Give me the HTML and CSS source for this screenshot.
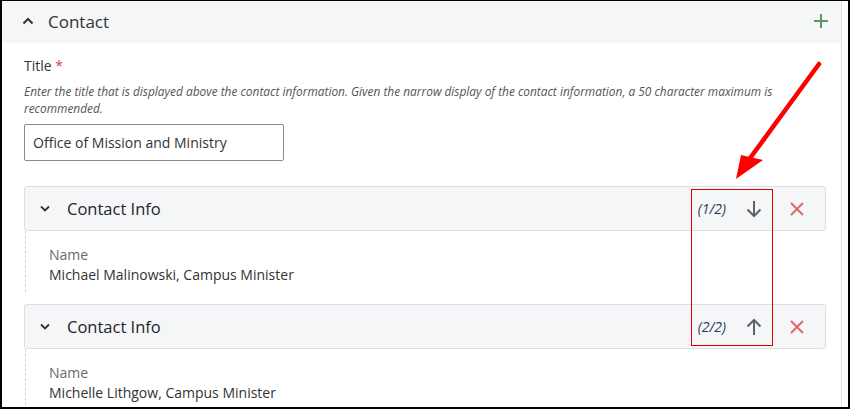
FILE: index.html
```html
<!DOCTYPE html>
<html lang="en">
<head>
<meta charset="utf-8">
<title>Contact</title>
<link rel="stylesheet" href="styles.css">
</head>
<body>
<div class="frame">
  <div class="panel">
    <div class="panel-head">
      <svg class="chev-up" width="12" height="8" viewBox="0 0 12 8"><path d="M1.5 6.5 L6 2 L10.5 6.5" fill="none" stroke="#333" stroke-width="2"/></svg>
      <span class="panel-title">Contact</span>
      <svg class="plus" width="16" height="16" viewBox="0 0 16 16"><path d="M8 1 V15 M1 8 H15" stroke="#5b9a5f" stroke-width="2"/></svg>
    </div>
    <div class="panel-body">
      <div class="label">Title <span class="req">*</span></div>
      <div class="desc">Enter the title that is displayed above the contact information. Given the narrow display of the contact information, a 50 character maximum is recommended.</div>
      <div class="input">Office of Mission and Ministry</div>

      <div class="card">
        <svg class="chev-down" width="10" height="7" viewBox="0 0 10 7"><path d="M1 1.5 L5 5.5 L9 1.5" fill="none" stroke="#333" stroke-width="1.8"/></svg>
        <span class="card-title">Contact Info</span>
        <span class="count">(1/2)</span>
        <svg class="move" width="18" height="20" viewBox="0 0 18 20"><path d="M9 2 V17 M2.5 10.5 L9 17 L15.5 10.5" fill="none" stroke="#5f6368" stroke-width="2"/></svg>
        <svg class="remove" width="16" height="16" viewBox="0 0 16 16"><path d="M2 2 L14 14 M14 2 L2 14" stroke="#e06a6a" stroke-width="2"/></svg>
      </div>
      <div class="card-body">
        <div class="field-label">Name</div>
        <div class="field-value">Michael Malinowski, Campus Minister</div>
      </div>

      <div class="card">
        <svg class="chev-down" width="10" height="7" viewBox="0 0 10 7"><path d="M1 1.5 L5 5.5 L9 1.5" fill="none" stroke="#333" stroke-width="1.8"/></svg>
        <span class="card-title">Contact Info</span>
        <span class="count">(2/2)</span>
        <svg class="move" width="18" height="20" viewBox="0 0 18 20"><path d="M9 18 V3 M2.5 9.5 L9 3 L15.5 9.5" fill="none" stroke="#5f6368" stroke-width="2"/></svg>
        <svg class="remove" width="16" height="16" viewBox="0 0 16 16"><path d="M2 2 L14 14 M14 2 L2 14" stroke="#e06a6a" stroke-width="2"/></svg>
      </div>
      <div class="card-body">
        <div class="field-label">Name</div>
        <div class="field-value">Michelle Lithgow, Campus Minister</div>
      </div>
    </div>
  </div>
  <div class="highlight"></div>
  <svg class="pointer" width="850" height="409" viewBox="0 0 850 409">
    <path d="M819 64 L748 161" stroke="#ff0000" stroke-width="4.5" stroke-linecap="round"/>
    <path d="M736 179 L741 155 L763 160 Z" fill="#ff0000"/>
  </svg>
</div>
</body>
</html>
```
FILE: styles.css
```css
* { box-sizing: border-box; }
html, body { margin: 0; padding: 0; background: #fff; }
body { font-family: "Open Sans", "Noto Sans", sans-serif; color: #333; }

.frame {
  position: relative;
  width: 850px;
  height: 409px;
  border-top: 1px solid #000;
  border-left: 2px solid #000;
  border-right: 2px solid #000;
  border-bottom: 2px solid #000;
  overflow: hidden;
}

.panel {
  width: 840px;
  height: 100%;
  border-right: 1px solid #dfe1e5;
}

.panel-head {
  height: 42px;
  background: #f5f6f8;
  display: flex;
  align-items: center;
  padding-left: 20px;
  padding-right: 12px;
}
.chev-up { margin-top: -2px; }
.panel-title {
  margin-left: 14px;
  font-size: 17px;
  color: #333;
  flex: 1;
  margin-top: -1px;
}
.plus { margin-top: -3px; }

.panel-body { padding: 0 14px 0 22px; }

.label {
  margin-top: 13px;
  font-size: 14px;
  line-height: 20px;
  color: #333;
}
.req { color: #e03c3c; }

.desc {
  margin-top: 7px;
  font-size: 11.9px;
  line-height: 17px;
  font-style: italic;
  color: #555;
  padding-right: 30px;
}

.input {
  margin-top: 7px;
  width: 260px;
  height: 37px;
  border: 1px solid #8a8a8a;
  border-radius: 2px;
  padding: 0 8px;
  font-size: 14px;
  line-height: 35px;
  color: #333;
}

.card {
  margin-top: 25px;
  height: 45px;
  width: 802px;
  background: #f5f6f8;
  border: 1px solid #dcdfe3;
  border-radius: 3px;
  display: flex;
  align-items: center;
  padding: 0 20px 0 15px;
}
.card-body + .card { margin-top: 12px; }
.card-title {
  margin-left: 17px;
  font-size: 16.5px;
  color: #1f2328;
  flex: 1;
}
.count {
  font-size: 14px;
  font-style: italic;
  color: #2b3a55;
}
.move { margin-left: 19px; }
.remove { margin-left: 26px; }

.card-body {
  margin-left: 1px;
  border-left: 1px dashed #d4d4d4;
  padding: 14px 0 7px 23px;
}
.field-label {
  font-size: 14px;
  line-height: 20px;
  color: #6b6b6b;
}
.field-value {
  font-size: 14px;
  line-height: 20px;
  color: #333;
}

.highlight {
  position: absolute;
  left: 689px;
  top: 188px;
  width: 82px;
  height: 157px;
  border: 1.5px solid #e00000;
}
.pointer {
  position: absolute;
  left: -2px;
  top: -1px;
}
```
